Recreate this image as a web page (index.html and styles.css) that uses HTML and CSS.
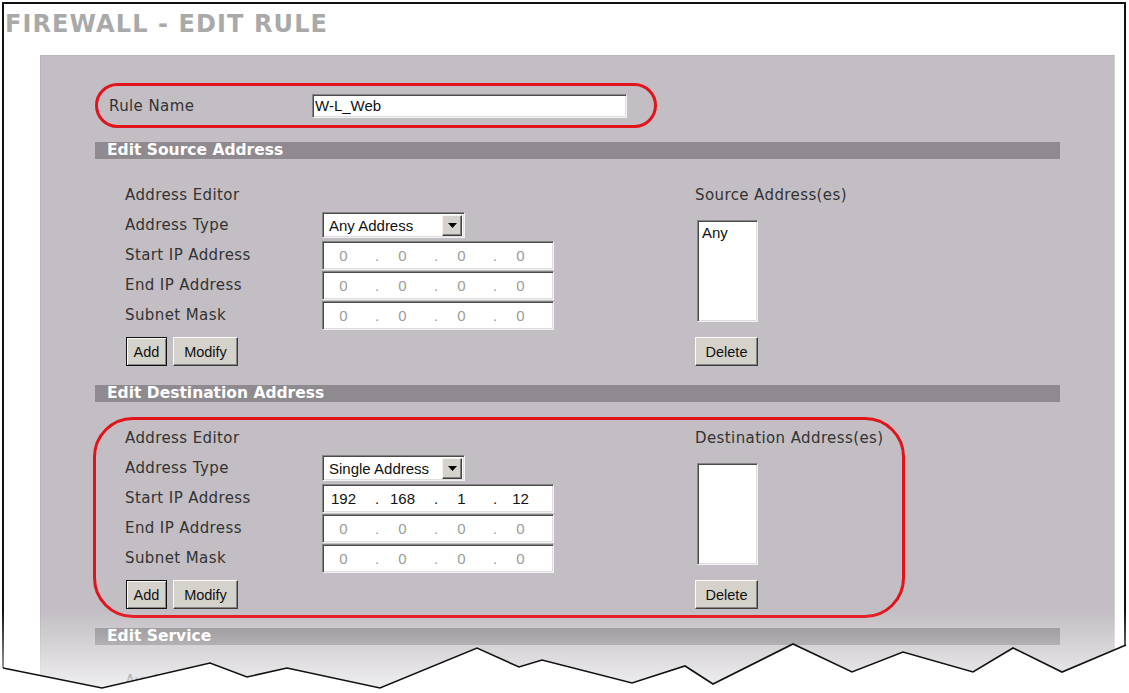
FILE: index.html
```html
<!DOCTYPE html>
<html lang="en">
<head>
  <meta charset="UTF-8">
  <meta name="viewport" content="width=device-width, initial-scale=1">
  <title>Firewall - Edit Rule</title>
  <link rel="stylesheet" href="styles.css">
</head>
<body>
  <div class="sheet">
    <div class="page-head">
      <h1 class="page-title">FIREWALL - EDIT RULE</h1>
    </div>

    <div class="panel">
      <div class="rule-row">
        <label class="rule-label" for="ruleName">Rule Name</label>
        <input class="field rule-name" id="ruleName" type="text" value="W-L_Web">
      </div>

      <!-- source address -->
      <div class="section">
        <div class="section-bar">Edit Source Address</div>
        <div class="section-body">
          <div class="editor-col">
            <div class="editor">
              <span class="label wide">Address Editor</span>
              <span class="label">Address Type</span>
              <div class="field select">
                <span class="select-value">Any Address</span>
                <span class="select-arrow">
                  <svg width="9" height="5" viewBox="0 0 9 5"><path d="M0 0h9L4.5 5z" fill="#000"/></svg>
                </span>
              </div>
              <span class="label">Start IP Address</span>
              <div class="field ip off"><span>0</span><i>.</i><span>0</span><i>.</i><span>0</span><i>.</i><span>0</span></div>
              <span class="label">End IP Address</span>
              <div class="field ip off"><span>0</span><i>.</i><span>0</span><i>.</i><span>0</span><i>.</i><span>0</span></div>
              <span class="label">Subnet Mask</span>
              <div class="field ip off"><span>0</span><i>.</i><span>0</span><i>.</i><span>0</span><i>.</i><span>0</span></div>
            </div>
            <div class="btn-row">
              <button class="btn btn-default btn-add">Add</button>
              <button class="btn btn-modify">Modify</button>
            </div>
          </div>
          <div class="list-col">
            <span class="label">Source Address(es)</span>
            <div class="field listbox"><div class="list-item">Any</div></div>
            <button class="btn btn-delete">Delete</button>
          </div>
        </div>
      </div>

      <!-- destination address -->
      <div class="section">
        <div class="section-bar">Edit Destination Address</div>
        <div class="section-body marked">
          <div class="editor-col">
            <div class="editor">
              <span class="label wide">Address Editor</span>
              <span class="label">Address Type</span>
              <div class="field select">
                <span class="select-value">Single Address</span>
                <span class="select-arrow">
                  <svg width="9" height="5" viewBox="0 0 9 5"><path d="M0 0h9L4.5 5z" fill="#000"/></svg>
                </span>
              </div>
              <span class="label">Start IP Address</span>
              <div class="field ip"><span>192</span><i>.</i><span>168</span><i>.</i><span>1</span><i>.</i><span>12</span></div>
              <span class="label">End IP Address</span>
              <div class="field ip off"><span>0</span><i>.</i><span>0</span><i>.</i><span>0</span><i>.</i><span>0</span></div>
              <span class="label">Subnet Mask</span>
              <div class="field ip off"><span>0</span><i>.</i><span>0</span><i>.</i><span>0</span><i>.</i><span>0</span></div>
            </div>
            <div class="btn-row">
              <button class="btn btn-default btn-add">Add</button>
              <button class="btn btn-modify">Modify</button>
            </div>
          </div>
          <div class="list-col">
            <span class="label">Destination Address(es)</span>
            <div class="field listbox"></div>
            <button class="btn btn-delete">Delete</button>
          </div>
        </div>
      </div>

      <!-- service -->
      <div class="section">
        <div class="section-bar">Edit Service</div>
        <div class="section-body">
          <div class="editor-col">
            <span class="label">Available Services</span>
          </div>
        </div>
      </div>
    </div>
  </div>

  <div class="fade"></div>
  <svg class="tear" viewBox="0 630 1129 63" preserveAspectRatio="none">
    <polygon fill="#fff" points="0,668 3,668 102,688 210,663 247,677 287,668 380,688 477,648 519,667 542,660 632,683 685,666 713,684 793,644 852,672 903,652 973,672 1013,648 1062,672 1126,645 1129,645 1129,693 0,693"/>
    <polyline fill="none" stroke="#111" stroke-width="1.6" stroke-linejoin="miter" points="3,668 102,688 210,663 247,677 287,668 380,688 477,648 519,667 542,660 632,683 685,666 713,684 793,644 852,672 903,652 973,672 1013,648 1062,672 1126,645"/>
  </svg>
</body>
</html>
```

FILE: styles.css
```css
  body {
    margin: 0;
    padding: 0;
    background: white;
    position: relative;
    overflow: hidden;
    font-family: 'DejaVu Sans', Verdana, sans-serif;
  }

  /* black frame round the page, open at the bottom */
  .sheet {
    margin: 2px 0 0 2px;
    width: 1120px;
    height: 691px;
    border: 2px solid #111;
    border-bottom: none;
    overflow: hidden;
  }

  .page-head {
    height: 51px;
  }

  .page-title {
    margin: 0;
    padding: 5px 0 0 1px;
    font-size: 24px;
    line-height: 30px;
    font-weight: bold;
    letter-spacing: 1.1px;
    color: #a9a9a9;
  }

  .panel {
    margin-left: 36px;
    width: 1075px;
    min-height: 700px;
    box-sizing: border-box;
    background: #c2bec3;
    border: 1px solid #b8b5b9;
    border-right-color: #d2d0d3;
    padding: 27px 54px 0 54px;
  }

  .label {
    font-size: 15px;
    letter-spacing: 0.4px;
    color: #333;
    white-space: nowrap;
  }

  /* red marker outlines */
  .rule-row {
    display: flex;
    align-items: center;
    width: 562px;
    height: 45px;
    box-sizing: border-box;
    border: 3px solid #e2141b;
    border-radius: 23px;
    padding-left: 11px;
    margin-bottom: 14px;
  }

  .rule-label {
    width: 203px;
    font-size: 15px;
    letter-spacing: 0.4px;
    color: #333;
  }

  .section-bar {
    height: 17px;
    line-height: 17px;
    background: #8e8a8f;
    color: white;
    font-weight: bold;
    font-size: 15.5px;
    padding-left: 12px;
    margin-bottom: 15px;
    white-space: nowrap;
  }

  .section-body {
    display: grid;
    grid-template-columns: 570px auto;
    width: 812px;
    box-sizing: border-box;
    margin-left: -2px;
    margin-bottom: 10px;
    border: 3px solid transparent;
    border-radius: 40px;
    padding: 3px 0 6px 29px;
  }

  .section-body.marked {
    border-color: #e2141b;
  }

  .editor {
    display: grid;
    grid-template-columns: 197px auto;
    grid-auto-rows: 30px;
    align-items: center;
  }

  .editor .wide {
    grid-column: 1 / -1;
  }

  /* sunken windows-style inputs */
  .field {
    box-sizing: border-box;
    background: white;
    border: 1px solid;
    border-color: #858585 #f2f2f2 #f2f2f2 #858585;
    box-shadow: inset 1px 1px #4a4a4a, inset -1px -1px #dedede;
    font-family: 'Liberation Sans', Arial, sans-serif;
    font-size: 15px;
    color: #111;
  }

  .rule-name {
    width: 315px;
    height: 24px;
    padding: 0 2px;
    outline: none;
  }

  .select {
    width: 143px;
    height: 26px;
    display: flex;
    align-items: center;
    justify-content: space-between;
    padding: 2px 2px 2px 6px;
  }

  .select-arrow {
    width: 20px;
    height: 21px;
    box-sizing: border-box;
    background: #d5d2cb;
    border: 1px solid;
    border-color: #f4f3f0 #404040 #404040 #f4f3f0;
    box-shadow: inset -1px -1px #808080;
    display: flex;
    align-items: center;
    justify-content: center;
  }

  .ip {
    width: 232px;
    height: 29px;
    display: flex;
    align-items: center;
    padding-left: 1px;
  }

  .ip span {
    width: 39px;
    text-align: center;
  }

  /* separator dot sits closer to the next octet */
  .ip i {
    width: 20px;
    box-sizing: border-box;
    padding-left: 8px;
    text-align: center;
    font-style: normal;
  }

  .ip.off {
    color: #9c9c9c;
  }

  .btn-row {
    display: flex;
    gap: 6px;
    margin-top: 7px;
    padding-left: 1px;
  }

  .btn {
    height: 29px;
    padding: 0;
    font-family: 'Liberation Sans', Arial, sans-serif;
    font-size: 14.5px;
    color: #111;
    background: #d5d2cb;
    border: 1px solid;
    border-color: #fbfaf8 #3c3c3c #3c3c3c #fbfaf8;
    box-shadow: inset -1px -1px #858585;
  }

  .btn-default {
    border-color: #111;
    box-shadow: inset 1px 1px #fbfaf8, inset -1px -1px #858585;
  }

  .btn-add { width: 41px; }
  .btn-modify { width: 65px; }

  .list-col {
    display: flex;
    flex-direction: column;
    align-items: flex-start;
  }

  .list-col .label {
    height: 30px;
    line-height: 30px;
  }

  .listbox {
    width: 61px;
    height: 102px;
    margin: 10px 0 0 2px;
    padding: 3px 4px;
  }

  .btn-delete {
    width: 63px;
    margin-top: 15px;
  }

  .editor-col > .label {
    display: block;
    line-height: 30px;
  }

  /* the page fades out towards the torn edge */
  .fade {
    position: absolute;
    left: 0;
    top: 610px;
    width: 1129px;
    height: 83px;
    background: linear-gradient(to bottom, rgba(255, 255, 255, 0), rgba(255, 255, 255, 0.35) 45%, rgba(255, 255, 255, 0.8));
  }

  .tear {
    position: absolute;
    left: 0;
    top: 630px;
    width: 1129px;
    height: 63px;
  }
```
